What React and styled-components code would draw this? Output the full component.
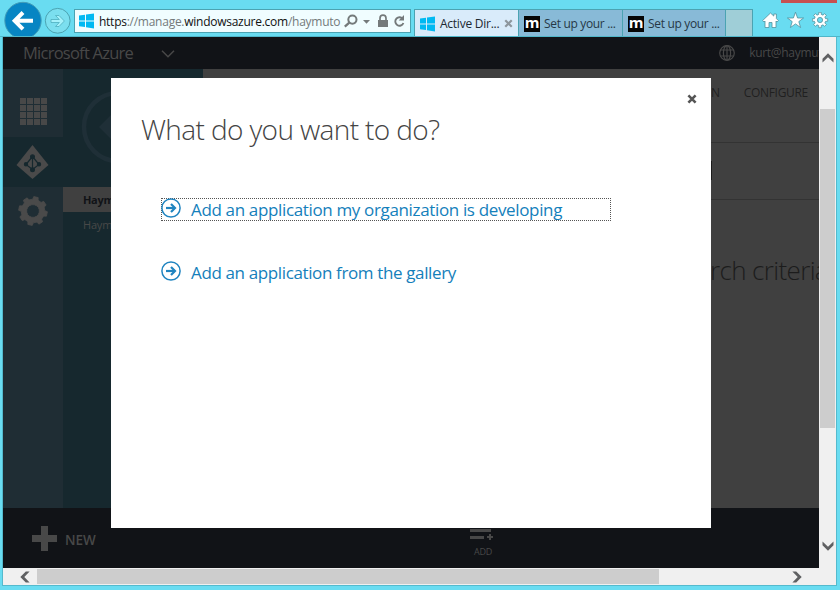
import React from "react";
import styled, { createGlobalStyle } from "styled-components";

const Global = createGlobalStyle`
  * { box-sizing: border-box; }
  body { margin: 0; overflow: hidden; font-family: "Open Sans", "Noto Sans", sans-serif; }
  svg { display: block; flex: none; }
`;

const Window = styled.div`
  width: 840px;
  height: 590px;
  display: flex;
  flex-direction: column;
  background: #69dcf1;
  position: relative;
  overflow: hidden;
`;
const CloseEdge = styled.div`
  position: absolute;
  left: 781px;
  top: 0;
  width: 56px;
  height: 3px;
  background: #c75050;
`;
const Text = styled.span`
  white-space: pre;
  flex: none;
  font-size: ${(p) => p.$size}px;
  line-height: ${(p) => p.$line || 20}px;
  letter-spacing: ${(p) => p.$track || 0}px;
  font-weight: ${(p) => p.$weight || 400};
  color: ${(p) => p.$color};
`;

const Chrome = styled.header`
  height: 37px;
  flex: none;
  display: flex;
  align-items: flex-start;
  padding-left: 3px;
  border-bottom: 1px solid #4fb6c9;
`;
const AddressBar = styled.div`
  margin: 9px 0 0 3px;
  width: 337px;
  height: 24px;
  border: 1px solid #4ba3b2;
  background: #f0fdff;
  display: flex;
  align-items: center;
  padding-left: 4px;
`;
const Url = styled.div`
  width: 243px;
  margin: 2px 0 0 5px;
  display: flex;
`;
const Tabs = styled.div`
  display: flex;
  margin: 9px 0 0 3px;
  height: 27px;
  border: 1px solid #4ba3b2;
  border-bottom: 0;
`;
const Tab = styled.div`
  width: ${(p) => p.$w}px;
  display: flex;
  align-items: center;
  gap: ${(p) => p.$gap || 4}px;
  padding: 1px 0 0 5px;
  background: ${(p) => p.$bg};
  border-right: ${(p) => (p.$last ? "0" : "1px solid #4ba3b2")};
`;
const Favicon = styled.div`
  width: 16px;
  height: 16px;
  flex: none;
  background: #050505;
  color: #fff;
  font: 700 15px/12px "Open Sans", sans-serif;
  text-align: center;
  display: flex;
  justify-content: center;
`;
const Tools = styled.div`
  display: flex;
  gap: 8px;
  margin: 12px 0 0 9px;
`;

const Viewport = styled.main`
  display: grid;
  grid-template-columns: 816px 17px;
  grid-template-rows: 531px 17px;
  width: 835px;
  height: 549px;
  margin-left: 2px;
  border: solid #54bacd;
  border-width: 0 1px 1px 1px;
`;
const Page = styled.div`
  display: flex;
  flex-direction: column;
  overflow: hidden;
  background: #404040;
`;
const TopBar = styled.div`
  height: 32px;
  flex: none;
  display: flex;
  align-items: center;
  background: #111317;
  padding-left: 20px;
`;
const ProductName = styled.div`
  width: 111px;
  display: flex;
`;
const Divider = styled.div`
  width: 1px;
  height: 18px;
  margin: 0 8px 0 20px;
  background: #292b2e;
`;
const Account = styled.div`
  display: flex;
  align-items: center;
  gap: 14px;
  margin-left: 544px;
`;
const Middle = styled.div`
  height: 439px;
  flex: none;
  display: flex;
`;
const Rail = styled.nav`
  width: 60px;
  background: #1f2d34;
`;
const RailItem = styled.div`
  height: ${(p) => p.$h}px;
  padding: ${(p) => p.$pad};
  background: ${(p) => (p.$active ? "#16282e" : "transparent")};
`;
const SubNav = styled.div`
  width: 140px;
  background: #16282e;
  overflow: hidden;
`;
const BackArea = styled.div`
  height: 118px;
  padding: 21px 0 0 18px;
`;
const SubItem = styled.div`
  height: 25px;
  padding-left: 20px;
  display: flex;
  align-items: center;
  background: ${(p) => (p.$active ? "#404040" : "transparent")};
`;
const Content = styled.section`
  flex: 1;
  overflow: hidden;
`;
const PageTabs = styled.div`
  height: 73px;
  padding: 14px 11px 0 0;
  display: flex;
  justify-content: flex-end;
  gap: 24px;
`;
const Filter = styled.div`
  height: 58px;
  border: solid #333;
  border-width: 1px 0;
  padding: 18px 0 0 508px;
`;
const FilterEdge = styled.div`
  width: 1px;
  height: 19px;
  background: #1c1c1c;
`;
const EmptyNote = styled.div`
  padding: 50px 0 0 494px;
`;
const CommandBar = styled.footer`
  height: 60px;
  background: #111317;
  display: flex;
  padding-left: 29px;
`;
const NewCommand = styled.div`
  display: flex;
  align-items: center;
  gap: 8px;
  width: 438px;
`;
const NewLabel = styled.div`
  display: flex;
  padding-top: 3px;
`;
const AddCommand = styled.div`
  padding-top: 20px;
  display: flex;
  flex-direction: column;
`;
const AddLabel = styled.div`
  display: flex;
  margin: 4px 0 0 4px;
`;
const VScroll = styled.div`
  background: #f0f0f0;
  display: flex;
  flex-direction: column;
  align-items: center;
`;
const HScroll = styled.div`
  grid-column: 1 / 3;
  background: #f0f0f0;
  display: flex;
  align-items: center;
`;
const Arrow = styled.div`
  width: ${(p) => p.$w}px;
  height: ${(p) => p.$h}px;
  padding: ${(p) => p.$pad};
  flex: none;
`;
const Thumb = styled.div`
  width: ${(p) => p.$w}px;
  height: ${(p) => p.$h}px;
  background: #cdcdcd;
`;
const Dialog = styled.div`
  position: absolute;
  left: 111px;
  top: 78px;
  width: 600px;
  height: 450px;
  background: #fff;
  padding: 16px 14px 0 30px;
`;
const DialogTop = styled.div`
  display: flex;
  justify-content: flex-end;
  height: 16px;
`;
const Heading = styled.h1`
  margin: 0;
  height: 88px;
  display: flex;
`;
const Choice = styled.a`
  margin: 0 0 40px 20px;
  width: 450px;
  height: 23px;
  display: flex;
  align-items: center;
  gap: 10px;
  border: 1px ${(p) => (p.$focused ? "dotted #555" : "solid transparent")};

  svg { margin: 0 0 3px -1px; }
`;

const WindowsLogo = () => (
  <svg width="15" height="16" viewBox="0 0 15 16" fill="#00b9f2">
    <path d="M0 2.6 6 1.7V7.4H0ZM7 1.5 15 .4V7.4H7ZM0 8.4H6V14L0 13.2ZM7 8.4H15V15.4L7 14.3Z" />
  </svg>
);
const Back = () => (
  <svg width="39" height="36" viewBox="0 0 39 36">
    <circle cx="20" cy="20.5" r="18.2" fill="#0785c3" stroke="#429db9" />
    <path d="M11.5 20.8H30M20 12.5 11.7 20.8 20 29.1" fill="none" stroke="#fff" strokeWidth="4" />
  </svg>
);
const Forward = () => (
  <svg width="29" height="36" viewBox="0 0 29 36">
    <circle cx="15.7" cy="20.8" r="12.4" fill="#7bdfef" stroke="#4ba3b2" />
    <path d="M9 19.5H17.3L13.5 15.5H17L22.4 21 17 26.5H13.5L17.3 22.5H9Z" fill="#a5f2fb" stroke="#4eafbf" strokeWidth=".8" />
  </svg>
);
const AddressIcons = () => (
  <svg width="65" height="22" viewBox="0 0 65 22" fill="none" stroke="#747a7b">
    <circle cx="10.4" cy="9.6" r="4.1" strokeWidth="2" />
    <path d="M7.3 12.6 2.8 16.6" strokeWidth="2.3" />
    <path d="M21 10H28L24.5 13.8Z" fill="#747a7b" stroke="none" />
    <path d="M36 10H46V17H36Z" fill="#747a7b" stroke="none" />
    <path d="M38 10V8.2a3 3 0 0 1 6 0V10" strokeWidth="1.7" />
    <path d="M61 9.2A4.2 4.2 0 1 0 61.4 13" strokeWidth="1.9" />
    <path d="M62 5V10.5H56.7Z" fill="#747a7b" stroke="none" />
  </svg>
);
const Cross = ({ size, color, width }) => (
  <svg width={size} height={size} viewBox="0 0 10 10">
    <path d="M1.4 1.4 8.6 8.6M8.6 1.4 1.4 8.6" stroke={color} strokeWidth={width} />
  </svg>
);
const Home = () => (
  <svg width="17" height="18" viewBox="0 0 17 18" fill="#fff" stroke="#52919d" strokeWidth=".8">
    <path d="M8.5 1 11.8 4.1V2H14.4V6.6L16.4 8.6 15 10 14 9V15.5H10V10.5H7V15.5H3V9L2 10 .6 8.6Z" />
  </svg>
);
const Star = () => (
  <svg width="17" height="18" viewBox="0 0 17 18" fill="#fff" stroke="#52919d" strokeWidth=".8">
    <path d="M8.5 .2 10.6 6H16.6L11.8 9.6 13.6 15.5 8.5 11.9 3.4 15.5 5.2 9.6.4 6H6.4Z" />
  </svg>
);
const gearPath = (c, outer, inner, teeth) => {
  const pts = [];
  for (let i = 0; i < teeth; i++) {
    [[-0.3, inner], [-0.2, outer], [0.2, outer], [0.3, inner]].forEach(([o, r]) => {
      const a = ((i + o) / teeth) * Math.PI * 2 - Math.PI / 2;
      pts.push(`${(c + r * Math.cos(a)).toFixed(2)} ${(c + r * Math.sin(a)).toFixed(2)}`);
    });
  }
  return `M${pts.join("L")}Z`;
};
const ToolGear = () => (
  <svg width="17" height="18" viewBox="0 0 17 18">
    <path d={gearPath(8, 7.8, 5.7, 8)} fill="#fff" stroke="#52919d" strokeWidth=".8" />
    <circle cx="8" cy="8" r="2.6" fill="#69dcf1" stroke="#52919d" strokeWidth=".8" />
  </svg>
);
const RailGear = () => (
  <svg width="30" height="30" viewBox="0 0 30 30">
    <path
      d={`${gearPath(15, 14.4, 11.8, 8)}M21.4 15a6.4 6.4 0 1 0-12.8 0a6.4 6.4 0 1 0 12.8 0Z`}
      fill="#4a4a4a"
      fillRule="evenodd"
      stroke="#4a4a4a"
      strokeWidth=".8"
      strokeLinejoin="round"
      transform="rotate(12 15 15)"
    />
  </svg>
);
const AppGrid = () => (
  <svg width="27" height="27" viewBox="0 0 27 27" fill="#484848">
    {[0, 7, 14, 21].map((y) => [0, 7, 14, 21].map((x) => <rect key={`${x}-${y}`} x={x} y={y} width="6" height="6" />))}
  </svg>
);
const Directory = () => (
  <svg width="33" height="34" viewBox="0 0 33 34">
    <path d="M16.5 0 32.5 20 16.5 34 .5 20Z" fill="#4a4a4a" />
    <g stroke="#16282e" fill="#16282e" strokeWidth="1.2">
      <path d="M16.5 11.5 10 19.5 16.5 24.5 23 19.5ZM16.5 11V25" fill="none" />
      <circle cx="16.5" cy="11.8" r="1.9" />
      <circle cx="10" cy="19.3" r="1.6" />
      <circle cx="23" cy="19.3" r="1.6" />
      <circle cx="16.5" cy="24.7" r="1.9" />
    </g>
  </svg>
);
const BigBack = () => (
  <svg width="74" height="74" viewBox="0 0 74 74">
    <circle cx="37" cy="37" r="34" fill="none" stroke="#1f2f37" strokeWidth="4.5" />
    <path d="M18 37 31 24H43L34 34H56V40H34L43 50H31Z" fill="#1f2f37" />
  </svg>
);
const Chevron = () => (
  <svg width="14" height="10" viewBox="0 0 14 10">
    <path d="M1 2.8 7 8.8 13 2.8" fill="none" stroke="#484848" strokeWidth="1.5" />
  </svg>
);
const Globe = () => (
  <svg width="16" height="16" viewBox="0 0 16 16" fill="none" stroke="#484848" strokeWidth="1.2">
    <circle cx="8" cy="8" r="7.3" />
    <ellipse cx="8" cy="8" rx="3.6" ry="7.3" />
    <path d="M8 .7V15.3M1.3 5H14.7M1.3 11H14.7" />
  </svg>
);
const Plus = () => (
  <svg width="25" height="25" viewBox="0 0 25 25" fill="#484848">
    <path d="M9 0H16V9H25V16H16V25H9V16H0V9H9Z" />
  </svg>
);
const AddRows = () => (
  <svg width="23" height="12" viewBox="0 0 23 12" fill="#484848">
    <path d="M0 1H21V4H0ZM0 8H14V11H0ZM19 6H21V8H23V10H21V12H19V10H17V8H19Z" />
  </svg>
);
const ScrollChevron = ({ turn }) => (
  <svg width="12" height="12" viewBox="0 0 12 12">
    <path d="M.5 6.8 6 1.3 11.5 6.8V10.6L6 5.3.5 10.6Z" fill="#5f6062" transform={`rotate(${turn} 6 6)`} />
  </svg>
);
const CircleArrow = () => (
  <svg width="20" height="20" viewBox="0 0 20 20" fill="none" stroke="#1f84c0">
    <circle cx="10" cy="10" r="9.1" strokeWidth="1.5" />
    <path d="M5 10H14" strokeWidth="2.2" />
    <path d="M10 6 14 10 10 14" strokeWidth="2.2" />
  </svg>
);

const choices = [
  { label: "Add an application my organization is developing", focused: true, track: -0.35 },
  { label: "Add an application from the gallery", focused: false, track: -0.37 },
];

export default function App() {
  return (
    <>
      <Global />
      <Window>
        <CloseEdge />
        <Chrome>
          <Back />
          <Forward />
          <AddressBar>
            <WindowsLogo />
            <Url>
              <Text $size={12} $track={-0.26} $color="#111">https</Text>
              <Text $size={12} $track={-0.26} $color="#747a7b">://manage.</Text>
              <Text $size={12} $track={-0.26} $color="#111">windowsazure.com</Text>
              <Text $size={12} $track={-0.26} $color="#747a7b">/haymuto</Text>
            </Url>
            <AddressIcons />
          </AddressBar>
          <Tabs>
            <Tab $w={104} $gap={5} $bg="#d9ebfa">
              <WindowsLogo />
              <Text $size={12} $track={-0.25} $color="#202830">Active Dir...</Text>
              <Cross size={9} color="#8d969d" width={2.4} />
            </Tab>
            <Tab $w={104} $bg="#88bad7">
              <Favicon>m</Favicon>
              <Text $size={12} $track={-0.33} $color="#263846">Set up your ...</Text>
            </Tab>
            <Tab $w={103} $bg="#88bad7">
              <Favicon>m</Favicon>
              <Text $size={12} $track={-0.33} $color="#263846">Set up your ...</Text>
            </Tab>
            <Tab $w={26} $bg="#9fced7" $last />
          </Tabs>
          <Tools>
            <Home />
            <Star />
            <ToolGear />
          </Tools>
        </Chrome>
        <Viewport>
          <Page>
            <TopBar>
              <ProductName>
                <Text $size={16.5} $color="#484848" $track={-0.75}>Microsoft Azure</Text>
              </ProductName>
              <Divider />
              <Chevron />
              <Account>
                <Globe />
                <Text $size={12} $track={-0.3} $color="#484848">kurt@haymuto</Text>
              </Account>
            </TopBar>
            <Middle>
              <Rail>
                <RailItem $h={68} $pad="29px 0 0 17px"><AppGrid /></RailItem>
                <RailItem $h={50} $pad="8px 0 0 13px" $active><Directory /></RailItem>
                <RailItem $h={60} $pad="9px 0 0 15px"><RailGear /></RailItem>
              </Rail>
              <SubNav>
                <BackArea><BigBack /></BackArea>
                <SubItem $active><Text $size={11} $weight={700} $track={-0.3} $color="#111317">Haymuto</Text></SubItem>
                <SubItem><Text $size={11} $track={-0.2} $color="#484848">Haymuto</Text></SubItem>
              </SubNav>
              <Content>
                <PageTabs>
                  <Text $size={12} $color="#202020" $track={-0.3}>DOMAIN</Text>
                  <Text $size={12} $color="#202020" $track={-0.3}>CONFIGURE</Text>
                </PageTabs>
                <Filter><FilterEdge /></Filter>
                <EmptyNote>
                  <Text $size={26} $line={40} $weight={300} $track={-0.65} $color="#1c1c1c">arch criteria</Text>
                </EmptyNote>
              </Content>
            </Middle>
            <CommandBar>
              <NewCommand>
                <Plus />
                <NewLabel><Text $size={13.5} $weight={600} $color="#484848">NEW</Text></NewLabel>
              </NewCommand>
              <AddCommand>
                <AddRows />
                <AddLabel><Text $size={9} $line={16} $track={-0.2} $color="#484848">ADD</Text></AddLabel>
              </AddCommand>
            </CommandBar>
          </Page>
          <VScroll>
            <Arrow $w={12} $h={72} $pad="15px 0 0"><ScrollChevron turn={0} /></Arrow>
            <Thumb $w={15} $h={319} />
            <Arrow $w={12} $h={140} $pad="112px 0 0"><ScrollChevron turn={180} /></Arrow>
          </VScroll>
          <HScroll>
            <Arrow $w={34} $h={12} $pad="0 0 0 16px"><ScrollChevron turn={270} /></Arrow>
            <Thumb $w={622} $h={15} />
            <Arrow $w={150} $h={12} $pad="0 0 0 132px"><ScrollChevron turn={90} /></Arrow>
          </HScroll>
        </Viewport>
        <Dialog>
          <DialogTop><Cross size={10} color="#555" width={2.6} /></DialogTop>
          <Heading>
            <Text $size={28} $line={39} $weight={300} $track={-0.62} $color="#444">What do you want to do?</Text>
          </Heading>
          {choices.map((c) => (
            <Choice key={c.label} $focused={c.focused}>
              <CircleArrow />
              <Text $size={17} $color="#1480bb" $track={c.track}>{c.label}</Text>
            </Choice>
          ))}
        </Dialog>
      </Window>
    </>
  );
}
